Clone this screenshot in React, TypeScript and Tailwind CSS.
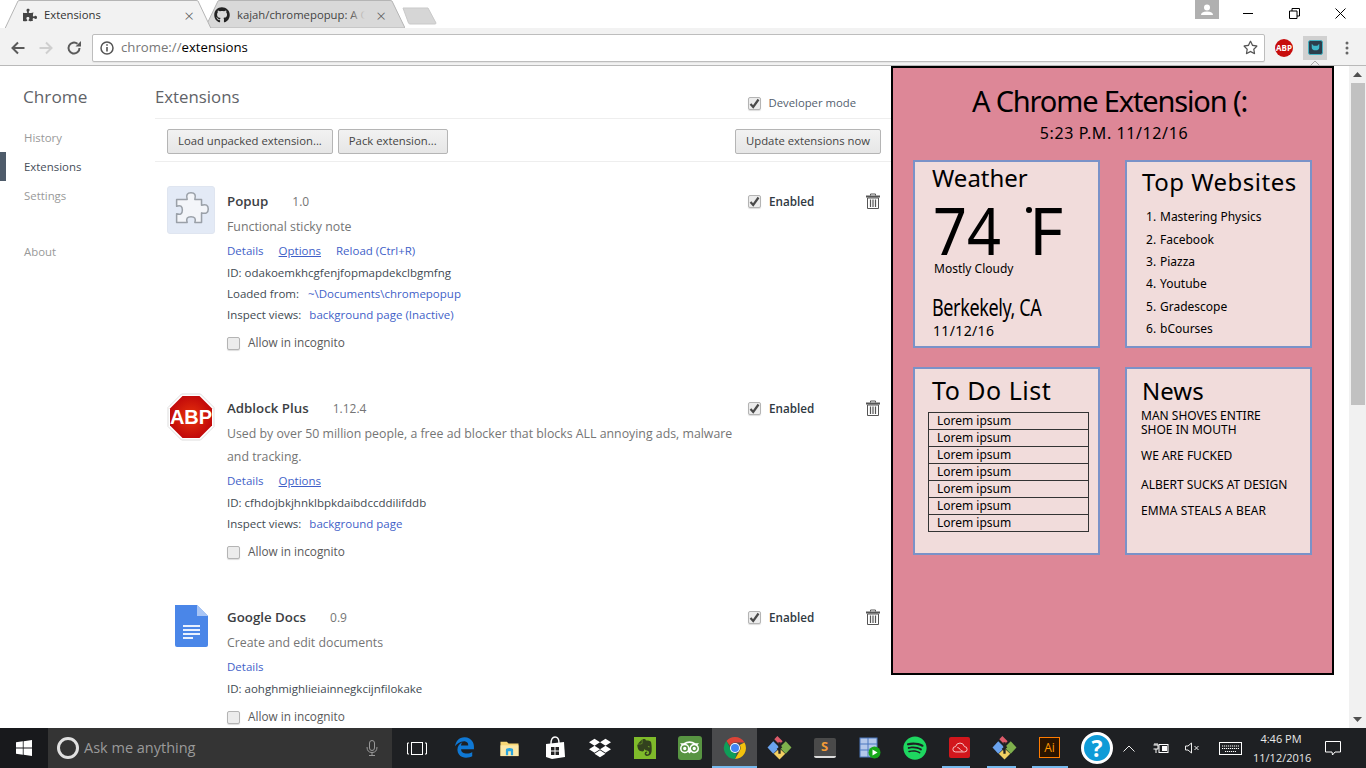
import React from "react";
import { FaPuzzlePiece, FaGithub, FaDropbox, FaSpotify, FaTripadvisor, FaRegStar } from "react-icons/fa";
import { FaEdgeLegacy } from "react-icons/fa6";
import { SiEvernote } from "react-icons/si";

const Check = ({ checked = false, className = "" }: { checked?: boolean; className?: string }) => (
  <span className={`relative inline-block h-[13px] w-[13px] rounded-[2px] border border-[#b4b4b4] bg-[#ececec] shadow-[0_1px_1px_#ddd] ${className}`}>
    {checked && (
      <svg viewBox="0 0 13 13" className="absolute -left-px -top-px h-[13px] w-[13px]">
        <path d="M2.5 7 L5.2 10 L10.5 2.5" fill="none" stroke="#4a4a4a" strokeWidth="2.2" />
      </svg>
    )}
  </span>
);

const A = ({ children, u = false }: { children: React.ReactNode; u?: boolean }) => (
  <span className={`text-[#3f5fc8] ${u ? "underline" : ""}`}>{children}</span>
);

const Trash = () => (
  <svg viewBox="0 0 14 16" className="h-[16px] w-[14px]">
    <path d="M4.5 2.5 V1 H9.5 V2.5" fill="none" stroke="#555" />
    <path d="M0 2.5 H14 V4.5 H0z" fill="#555" />
    <path d="M1.5 5 H12.5 V15.5 H1.5z" fill="none" stroke="#555" />
    <path d="M4.5 6.5 V14 M7 6.5 V14 M9.5 6.5 V14" stroke="#555" strokeWidth="1.2" />
  </svg>
);

const Row = ({ icon, name, ver, children, className = "" }: { icon: React.ReactNode; name: string; ver: string; children: React.ReactNode; className?: string }) => (
  <div className={`flex ${className}`}>
    <div className="ml-[12px] h-[48px] w-[60px] shrink-0">{icon}</div>
    <div className="w-[521px] shrink-0">
      <div className="flex h-[29px] items-center pt-[2px] text-[13.3px]">
        <span className="mr-[24px] font-semibold text-[#3c4043]">{name}</span>
        <span className="text-[12px] text-[#757575]">{ver}</span>
      </div>
      {children}
    </div>
    <div className="flex h-[30px] items-center">
      <Check checked />
      <span className="ml-[8px] mt-[2px] w-[97px] text-[11.7px] font-semibold text-[#303942]">Enabled</span>
      <Trash />
    </div>
  </div>
);

const Line = ({ h, children, className = "" }: { h: string; children: React.ReactNode; className?: string }) => (
  <div className={`flex items-center whitespace-nowrap text-[11.5px] text-[#414a52] ${h} ${className}`}>{children}</div>
);

const Allow = ({ className }: { className: string }) => (
  <div className={`flex h-[22px] items-center text-[11.8px] text-[#5a5a5a] ${className}`}>
    <Check className="mr-[8px]" />
    <span>Allow in incognito</span>
  </div>
);

const Btn = ({ children }: { children: React.ReactNode }) => (
  <div className="flex h-[25px] items-center rounded-[2px] border border-[#b5b5b5] bg-gradient-to-b from-[#f2f2f2] to-[#e6e6e6] px-[10px] text-[11.3px] text-[#444]">{children}</div>
);

const Card = ({ children, className = "" }: { children: React.ReactNode; className?: string }) => (
  <div className={`h-[188px] border-2 border-[#7a92c8] bg-[#f1dcdb] text-black ${className}`}>{children}</div>
);

const Chrome = () => (
  <svg viewBox="0 0 24 24" className="h-[24px] w-[24px]">
    <path d="M12 1a11 11 0 0 1 9.5 5.5H12a5.5 5.5 0 0 0-5 3.2L3.4 5A11 11 0 0 1 12 1z" fill="#db4437" />
    <path d="M21.5 6.5A11 11 0 0 1 12 23l4.7-8.2A5.5 5.5 0 0 0 16.7 9z" fill="#f4c20d" />
    <path d="M12 23A11 11 0 0 1 3.4 5l4.7 8.8a5.5 5.5 0 0 0 5.5 3.5z" fill="#0f9d58" />
    <circle cx="12" cy="12" r="5" fill="#fff" />
    <circle cx="12" cy="12" r="4" fill="#4285f4" />
  </svg>
);

const Tree = () => (
  <svg viewBox="0 0 24 24" className="h-[25px] w-[25px]">
    <path d="M12 12 L6 6 L0.5 12 L6 18z" fill="#6aa3ee" />
    <path d="M12 12 L18 6 L23.5 12 L18 18z" fill="#7fb04c" />
    <path d="M12 13 L6.5 18 L12 23.5 L17.5 18z" fill="#f2cf62" />
    <path d="M7 4 L10 1 L15 6 L12 9z" fill="#dd5b6a" />
    <path d="M12 7 V18 M10 14 L14 11" stroke="#222" strokeWidth="2.2" fill="none" />
  </svg>
);

const TI = ({ children, active = false, line = "" }: { children?: React.ReactNode; active?: boolean; line?: string }) => (
  <div className={`flex h-full w-[45px] shrink-0 flex-col ${active ? "bg-[#4a4b4d]" : ""}`}>
    <div className="flex min-h-0 flex-1 items-center justify-center pt-[1px]">{children}</div>
    <div className={`h-[2px] bg-[#76b9ed] ${line} ${line || active ? "" : "invisible"}`} />
  </div>
);

export default function App() {
  return (
    <div className="flex h-[768px] w-[1366px] flex-col overflow-hidden bg-white font-['Open_Sans',sans-serif] text-[12px]">
      {/* tab strip */}
      <div className="flex h-[28px] shrink-0 items-end bg-white pl-[5px]">
        <div className="relative z-10 h-[28px] w-[206px] shrink-0">
          <svg viewBox="0 0 206 28" className="absolute inset-0 h-full w-full">
            <path d="M0 28.5 L13 1 Q13.5 .5 15 .5 H191 Q192.5 .5 193 1 L206 28.5" fill="#f2f2f2" stroke="#b5b5b5" />
          </svg>
          <div className="relative flex h-full items-center pl-[18px] pr-[17px] pt-[2px]">
            <FaPuzzlePiece size={14} className="text-[#444]" />
            <span className="ml-[7px] flex-1 text-[11.3px] text-[#333]">Extensions</span>
            <span className="text-[17px] font-light leading-none text-[#555]">×</span>
          </div>
        </div>
        <div className="relative -ml-[6px] h-[28px] w-[200px] shrink-0">
          <svg viewBox="0 0 200 28" className="absolute inset-0 h-full w-full">
            <path d="M0 28 L13 1 Q13.5 .5 15 .5 H185 Q186 .5 187 1 L200 28z" fill="#d9d9d9" stroke="#b5b5b5" />
          </svg>
          <div className="relative flex h-full items-center pl-[9px] pr-[19px] pt-[2px]">
            <FaGithub size={16} className="shrink-0 text-[#222]" />
            <span className="relative ml-[7px] w-[128px] overflow-hidden whitespace-nowrap text-[11.3px] text-[#444]">
              kajah/chromepopup: A Chrome
              <span className="absolute inset-y-0 right-0 w-[16px] bg-gradient-to-r from-transparent to-[#d9d9d9]" />
            </span>
            <span className="ml-auto text-[17px] font-light leading-none text-[#555]">×</span>
          </div>
        </div>
        <svg viewBox="0 0 36 18" className="mb-[3px] -ml-[3px] h-[18px] w-[36px] shrink-0">
          <path d="M1 1 H26 L34 16 Q34 17 33 17 H8 Q7 17 6.5 16z" fill="#d6d6d6" stroke="#c9c9c9" />
        </svg>
        <div className="flex-1" />
        <div className="flex h-full items-start">
          <div className="mr-[6px] flex h-[19px] w-[24px] items-center justify-center bg-[#b0b0b0]">
            <svg viewBox="0 0 14 12" className="h-[12px] w-[14px]"><circle cx="7" cy="3.5" r="3" fill="#fff" /><path d="M1 11 Q1 7.5 7 7.5 Q13 7.5 13 11z" fill="#fff" /></svg>
          </div>
          <div className="flex h-[26px] w-[46px] items-center justify-center"><span className="h-px w-[10px] bg-black" /></div>
          <div className="flex h-[26px] w-[46px] items-center justify-center">
            <svg viewBox="0 0 11 11" className="h-[11px] w-[11px]"><path d="M.5 3 H8 V10.5 H.5z M3 3 V.5 H10.5 V8 H8" fill="none" stroke="#000" /></svg>
          </div>
          <div className="flex h-[26px] w-[46px] items-center justify-center">
            <svg viewBox="0 0 11 11" className="h-[11px] w-[11px]"><path d="M.5 .5 L10.5 10.5 M10.5 .5 L.5 10.5" stroke="#000" fill="none" /></svg>
          </div>
          <div className="w-[3px]" />
        </div>
      </div>
      {/* toolbar */}
      <div className="flex h-[38px] shrink-0 items-center border-b border-[#b9b9b9] bg-[#f2f2f2] pt-[2px]">
        <svg viewBox="0 0 16 16" className="ml-[10px] h-[16px] w-[16px]"><path d="M14.5 8 H2.5 M8 2.5 L2.5 8 L8 13.5" fill="none" stroke="#5a5a5a" strokeWidth="2" /></svg>
        <svg viewBox="0 0 16 16" className="ml-[12px] h-[16px] w-[16px]"><path d="M1.5 8 H13.5 M8 2.5 L13.5 8 L8 13.5" fill="none" stroke="#cfcfcf" strokeWidth="2" /></svg>
        <svg viewBox="0 0 16 16" className="ml-[12px] h-[16px] w-[16px]"><path d="M13.5 8 A5.5 5.5 0 1 1 11.5 3.8" fill="none" stroke="#5a5a5a" strokeWidth="2" /><path d="M9.5 6.5 H15 V1z" fill="#5a5a5a" /></svg>
        <div className="ml-[10px] flex h-[28px] w-[1173px] items-center rounded-[2px] border border-[#bdbdbd] bg-white pl-[7px] pr-[6px] shadow-[0_1px_0_#e5e5e5]">
          <svg viewBox="0 0 14 14" className="h-[14px] w-[14px]"><circle cx="7" cy="7" r="6" fill="none" stroke="#555" strokeWidth="1.5" /><path d="M7 6 V10.5 M7 3.2 V4.8" stroke="#555" strokeWidth="1.6" /></svg>
          <span className="ml-[7px] flex-1 text-[13.2px]"><span className="text-[#777]">chrome://</span><span className="text-black">extensions</span></span>
          <FaRegStar size={15} className="text-[#555]" />
        </div>
        <div className="ml-[10px] flex h-[18px] w-[18px] items-center justify-center rounded-full bg-[#c70d0d] text-[8px] font-bold leading-none text-white">ABP</div>
        <div className="relative ml-[10px] flex h-[24px] w-[24px] items-center justify-center bg-[#d0d0d0]">
          <svg viewBox="0 0 16 16" className="h-[15px] w-[15px]"><rect x=".5" y=".5" width="15" height="15" rx="2" fill="#2c3e4c" stroke="#3fb7c9" /><path d="M4 4 V8 Q4 11 8 11 Q12 11 12 8 V4 L10 6 H6z" fill="#3fb7c9" /></svg>
          <svg viewBox="0 0 10 5" className="absolute -bottom-[6px] left-[7px] h-[5px] w-[10px]"><path d="M0 5 L5 0 L10 5" fill="none" stroke="#aaa" /></svg>
        </div>
        <svg viewBox="0 0 4 14" className="ml-[18px] h-[14px] w-[4px]"><circle cx="2" cy="2" r="1.5" fill="#666" /><circle cx="2" cy="7" r="1.5" fill="#666" /><circle cx="2" cy="12" r="1.5" fill="#666" /></svg>
      </div>
      {/* page */}
      <div className="relative flex min-h-0 flex-1 overflow-hidden bg-white">
        <div className="w-[155px] shrink-0 pt-[19px]">
          <div className="pl-[23px] text-[17.2px] leading-[24px] text-[#5f6368]">Chrome</div>
          <div className="mt-[14px] flex h-[29px] items-center pl-[24px] text-[11.4px] text-[#999]">History</div>
          <div className="flex h-[29px] items-center border-l-[6px] border-[#4e5b6a] pl-[18px] text-[11.4px] text-[#464e5a]">Extensions</div>
          <div className="flex h-[29px] items-center pl-[24px] text-[11.4px] text-[#999]">Settings</div>
          <div className="mt-[27px] flex h-[29px] items-center pl-[24px] text-[11.4px] text-[#999]">About</div>
        </div>
        <div className="min-w-0 flex-1">
          <div className="flex h-[53px] w-[740px] items-start border-b border-[#eeeeee] pr-[39px] pt-[19px]">
            <span className="flex-1 text-[16.8px] leading-[24px] text-[#5f6368]">Extensions</span>
            <div className="mt-[11px] flex h-[14px] items-center">
              <Check checked className="mr-[8px]" />
              <span className="text-[11.3px] text-[#53606e]">Developer mode</span>
            </div>
          </div>
          <div className="flex h-[43px] w-[740px] items-start gap-[5px] border-b border-[#eeeeee] pl-[12px] pt-[10px]">
            <Btn>Load unpacked extension...</Btn>
            <Btn>Pack extension...</Btn>
            <div className="ml-auto mr-[14px]"><Btn>Update extensions now</Btn></div>
          </div>
          <div className="pt-[24px]">
            <Row
              className="mb-[39px]"
              name="Popup"
              ver="1.0"
              icon={
                <div className="flex h-[48px] w-[48px] items-center justify-center rounded-[3px] border border-[#dfe5f0] bg-[#e3eaf6]">
                  <svg viewBox="0 0 48 48" className="h-[46px] w-[46px]">
                    <path d="M9 13 H20 Q18 6 24 6 Q30 6 28 13 H35 V19 Q42 17 42 23 Q42 29 35 27 V37 H28 Q30 31 24 31 Q18 31 20 37 H9 V28 Q15 30 15 24 Q15 18 9 20z" fill="#f3f5f9" stroke="#9aa0a8" strokeWidth="1.6" strokeLinejoin="round" />
                  </svg>
                </div>
              }
            >
              <div className="text-[12.33px] leading-[23px] text-[#757575]">Functional sticky note</div>
              <Line h="h-[22px]" className="mt-[2px] gap-[15px]"><A>Details</A><A u>Options</A><A>Reload (Ctrl+R)</A></Line>
              <Line h="h-[22px]">ID: odakoemkhcgfenjfopmapdekclbgmfng</Line>
              <Line h="h-[20px]" className="gap-[9px]">Loaded from:<A>~\Documents\chromepopup</A></Line>
              <Line h="h-[21px]" className="gap-[8px]">Inspect views:<A>background page (Inactive)</A></Line>
              <Allow className="mt-[7px]" />
            </Row>
            <Row
              className="mb-[39px]"
              name="Adblock Plus"
              ver="1.12.4"
              icon={
                <svg viewBox="0 0 48 48" className="h-[48px] w-[48px]">
                  <defs>
                    <radialGradient id="abp"><stop offset="0" stopColor="#e8340c" /><stop offset="1" stopColor="#c20a0a" /></radialGradient>
                  </defs>
                  <path d="M14.5 1 H33.5 L47 14.5 V33.5 L33.5 47 H14.5 L1 33.5 V14.5z" fill="#fff" stroke="#ddd" />
                  <path d="M15.5 3 H32.5 L45 15.5 V32.5 L32.5 45 H15.5 L3 32.5 V15.5z" fill="url(#abp)" />
                  <text x="24" y="31" textAnchor="middle" fontFamily="'Liberation Sans',sans-serif" fontWeight="700" fontSize="20" fill="#fff">ABP</text>
                </svg>
              }
            >
              <div className="w-[515px] text-[12.33px] leading-[23px] text-[#757575]">Used by over 50 million people, a free ad blocker that blocks ALL annoying ads, malware and tracking.</div>
              <Line h="h-[22px]" className="mt-[2px] gap-[15px]"><A>Details</A><A u>Options</A></Line>
              <Line h="h-[21px]">ID: cfhdojbkjhnklbpkdaibdccddilifddb</Line>
              <Line h="h-[21px]" className="gap-[8px]">Inspect views:<A>background page</A></Line>
              <Allow className="mt-[7px]" />
            </Row>
            <Row
              name="Google Docs"
              ver="0.9"
              icon={
                <svg viewBox="0 0 48 48" className="h-[48px] w-[48px]">
                  <path d="M8 3 H30 L41 14 V43 Q41 45 39 45 H10 Q8 45 8 43z" fill="#4a86e8" />
                  <path d="M30 3 L41 14 H30z" fill="#a8c5f5" />
                  <path d="M16 24 H33 M16 28 H33 M16 32 H33 M16 36 H26" stroke="#e8f0fe" strokeWidth="2" />
                </svg>
              }
            >
              <div className="text-[12.33px] leading-[23px] text-[#757575]">Create and edit documents</div>
              <Line h="h-[22px]" className="mt-[2px]"><A>Details</A></Line>
              <Line h="h-[22px]">ID: aohghmighlieiainnegkcijnfilokake</Line>
              <Allow className="mt-[6px]" />
            </Row>
          </div>
        </div>
        {/* scrollbar */}
        <div className="flex w-[17px] shrink-0 flex-col items-center bg-[#f1f1f1]">
          <svg viewBox="0 0 9 5" className="mt-[6px] h-[5px] w-[9px]"><path d="M4.5 0 L9 5 H0z" fill="#505050" /></svg>
          <div className="mt-[6px] h-[322px] w-[14px] bg-[#c1c1c1]" />
          <div className="flex-1" />
          <svg viewBox="0 0 9 5" className="mb-[6px] h-[5px] w-[9px]"><path d="M4.5 5 L9 0 H0z" fill="#505050" /></svg>
        </div>
        {/* popup */}
        <div className="absolute left-[891px] top-0 h-[609px] w-[443px] border-2 border-black bg-[#dd8797] font-['Noto_Sans',sans-serif] text-black">
          <div className="h-[92px] text-center">
            <div className="pr-[6px] pt-[12px] text-[29px] leading-[42px] tracking-[-1.15px]">A Chrome Extension (:</div>
            <div className="pl-[3px] text-[16px] leading-[22px] tracking-[0.6px]">5:23 P.M. 11/12/16</div>
          </div>
          <div className="grid grid-cols-[187px_187px] gap-x-[25px] gap-y-[19px] pl-[20px]">
            <Card>
              <div className="pl-[17px] text-[24px] leading-[32px]">Weather</div>
              <div className="flex pl-[18px] text-[66px] leading-[70px]">
                <span className="w-[96px] shrink-0"><span className="inline-block origin-left scale-x-[0.9]">74</span></span>
                <span className="relative">
                  F
                  <span className="absolute -left-[3px] top-[13px] h-[6px] w-[6px] rounded-full bg-black" />
                </span>
              </div>
              <div className="-mt-[3px] pl-[19px] text-[12px] leading-[16px]">Mostly Cloudy</div>
              <div className="pl-[17px] pt-[14px] text-[24px] leading-[32px] tracking-[-0.5px]"><span className="inline-block origin-left scale-x-[0.75] whitespace-nowrap">Berkekely, CA</span></div>
              <div className="-mt-[1px] pl-[18px] text-[14px] leading-[18px] tracking-[0.35px]">11/12/16</div>
            </Card>
            <Card>
              <div className="pl-[15px] pt-[4px] text-[24px] leading-[32px] tracking-[0.5px]">Top Websites</div>
              <ol className="mt-[8px] pl-[19px] text-[12px]">
                {["Mastering Physics", "Facebook", "Piazza", "Youtube", "Gradescope", "bCourses"].map((t, i) => (
                  <li key={t} className="flex h-[22.4px] items-center">
                    <span className="w-[14px]">{i + 1}.</span>
                    {t}
                  </li>
                ))}
              </ol>
            </Card>
            <Card>
              <div className="pl-[17px] pt-[5px] text-[25px] leading-[32px] tracking-[0.5px]">To Do List</div>
              <div className="ml-[13px] mt-[6px] w-[161px] border-t border-[#333]">
                {[1, 2, 3, 4, 5, 6, 7].map((n) => (
                  <div key={n} className="flex h-[17px] items-center border-x border-b border-[#333] pl-[8px] text-[12px]">Lorem ipsum</div>
                ))}
              </div>
            </Card>
            <Card>
              <div className="pl-[15px] pt-[6px] text-[24px] leading-[32px]">News</div>
              <div className="pl-[14px] text-[12px] leading-[14px]">
                <div className="mt-[2px]">MAN SHOVES ENTIRE<br />SHOE IN MOUTH</div>
                <div className="mt-[12px]">WE ARE FUCKED</div>
                <div className="mt-[15px]">ALBERT SUCKS AT DESIGN</div>
                <div className="mt-[12px] tracking-[0.1px]">EMMA STEALS A BEAR</div>
              </div>
            </Card>
          </div>
        </div>
      </div>
      {/* taskbar */}
      <div className="flex h-[40px] shrink-0 items-center bg-[#1e2023] text-white">
        <div className="flex h-full w-[48px] items-center justify-center bg-[#18191c]">
          <svg viewBox="0 0 16 16" className="h-[16px] w-[16px]"><path d="M0 2.3 L6.8 1.3 V7.5 H0z M7.6 1.2 L16 0 V7.5 H7.6z M0 8.5 H6.8 V14.7 L0 13.7z M7.6 8.5 H16 V16 L7.6 14.8z" fill="#fff" /></svg>
        </div>
        <div className="flex h-full w-[344px] items-center bg-[#343434] pl-[9px] pr-[14px]">
          <span className="h-[22px] w-[22px] rounded-full border-[3px] border-[#e0e0e0]" />
          <span className="ml-[5px] flex-1 text-[14.5px] text-[#9a9a9a]">Ask me anything</span>
          <svg viewBox="0 0 12 16" className="h-[16px] w-[12px]"><rect x="3.5" y=".5" width="5" height="10" rx="2.5" fill="none" stroke="#999" /><path d="M1 7 Q1 12.5 6 12.5 Q11 12.5 11 7 M6 12.5 V15.5 M3 15.5 H9" fill="none" stroke="#999" /></svg>
        </div>
        <div className="flex h-full w-[50px] shrink-0 items-center justify-center">
          <svg viewBox="0 0 20 13" className="h-[13px] w-[20px]"><rect x="4.5" y=".5" width="11" height="12" fill="none" stroke="#fff" /><path d="M2 1 H.5 V12 H2 M18 1 H19.5 V12 H18" fill="none" stroke="#fff" /></svg>
        </div>
        <TI><FaEdgeLegacy size={21} className="text-[#0f78d4]" /></TI>
        <TI>
          <svg viewBox="0 0 22 20" className="h-[18px] w-[21px]"><path d="M1 3 H8 L10 5 H21 V19 H1z" fill="#f7d674" /><path d="M1 7 H21 V19 H1z" fill="#fbe8a8" /><path d="M7 18 V12 Q7 10 11 10 Q15 10 15 12 V18 H12.5 V13.5 H9.5 V18z" fill="#2aa5df" /></svg>
        </TI>
        <TI>
          <svg viewBox="0 0 22 24" className="h-[24px] w-[22px]"><path d="M2 8 L20 6 L21 21 L8 23 L2 21z" fill="#fff" /><path d="M7 8 Q7 1 11 1 Q15 1 15 7" fill="none" stroke="#fff" strokeWidth="1.4" /><path d="M7 11 H10.5 V14.5 H7z M11.5 11 H15 V14.5 H11.5z M7 15.5 H10.5 V19 H7z M11.5 15.5 H15 V19 H11.5z" fill="#222" /></svg>
        </TI>
        <TI><FaDropbox size={22} className="text-white" /></TI>
        <TI>
          <div className="flex h-[22px] w-[22px] items-center justify-center bg-[#7fbb2a]"><SiEvernote size={17} className="text-[#33421e]" /></div>
        </TI>
        <TI>
          <div className="flex h-[24px] w-[24px] items-center justify-center rounded-[3px] bg-[#589442]"><FaTripadvisor size={19} className="text-white" /></div>
        </TI>
        <TI active><Chrome /></TI>
        <TI><Tree /></TI>
        <TI>
          <div className="flex h-[20px] w-[22px] items-center justify-center rounded-[2px] border-b-2 border-[#ddd] bg-[#4a4a4a] text-[13px] font-bold leading-none text-[#f29b37]">S</div>
        </TI>
        <TI>
          <svg viewBox="0 0 22 22" className="h-[22px] w-[22px]"><rect x="1" y="1" width="17" height="19" fill="#b4c8ea" stroke="#4c78bf" /><path d="M1 7 H18 M1 13 H18 M9 1 V20" stroke="#4c78bf" /><circle cx="15.5" cy="15.5" r="6" fill="#17a81a" /><path d="M13.5 12.5 L18.5 15.5 L13.5 18.5z" fill="#fff" /></svg>
        </TI>
        <TI><FaSpotify size={24} className="text-[#1ed760]" /></TI>
        <TI line="ml-[5px] w-[28px]">
          <div className="flex h-[21px] w-[21px] items-center justify-center rounded-[2px] bg-[#d2161c]">
            <svg viewBox="0 0 18 12" className="h-[11px] w-[16px]"><path d="M4 11 Q1 11 1 8 Q1 5 4 5 Q5 1 9 1 Q13 1 14 5 Q17 5 17 8 Q17 11 14 11z M6 6 Q8 6 9 8 Q10 10 12 10" fill="none" stroke="#fbdada" /></svg>
          </div>
        </TI>
        <TI line="ml-[5px] w-[29px]"><Tree /></TI>
        <TI line="ml-[5px] w-[36px]">
          <div className="flex h-[21px] w-[21px] items-center justify-center border border-[#ff7c00] bg-[#2a1400] text-[12px] leading-none text-[#ff9a00]">Ai</div>
        </TI>
        <div className="ml-[9px] flex h-[32px] w-[32px] shrink-0 items-center justify-center rounded-full border-[3px] border-white bg-[#0f9bd7] text-[23px] font-bold leading-none text-white">?</div>
        <div className="flex h-full w-[32px] items-center justify-center">
          <svg viewBox="0 0 12 7" className="h-[7px] w-[12px]"><path d="M.5 6.5 L6 1 L11.5 6.5" fill="none" stroke="#eee" /></svg>
        </div>
        <div className="flex h-full w-[32px] items-center justify-center">
          <svg viewBox="0 0 17 12" className="h-[12px] w-[17px]"><path d="M.5 3 H5 V7 H.5 M2 1 V3 M4 1 V3 M3 7 V11" fill="none" stroke="#fff" /><rect x="6" y="2.5" width="9" height="8" fill="none" stroke="#fff" /><rect x="9" y="4" width="5" height="5" fill="#fff" /></svg>
        </div>
        <div className="flex h-full w-[30px] items-center justify-center">
          <svg viewBox="0 0 15 12" className="h-[12px] w-[15px]"><path d="M.5 4 H3 L6.5 1 V11 L3 8 H.5z M9.5 4 L13.5 8 M13.5 4 L9.5 8" fill="none" stroke="#eee" /></svg>
        </div>
        <div className="flex h-full w-[46px] items-center justify-center">
          <svg viewBox="0 0 23 13" className="h-[13px] w-[23px]"><rect x=".5" y=".5" width="22" height="12" fill="none" stroke="#fff" /><path d="M3 4 H20 M3 6.5 H20 M6 9.5 H17" stroke="#fff" strokeDasharray="1.2 .8" /></svg>
        </div>
        <div className="w-[56px] text-center text-[11px] leading-[19px] text-[#e8e8e8]">
          <div>4:46 PM</div>
          <div>11/12/2016</div>
        </div>
        <div className="flex h-full flex-1 items-center justify-center pr-[9px]">
          <svg viewBox="0 0 16 15" className="h-[15px] w-[16px]"><path d="M.5 .5 H15.5 V11 H10 L7.5 14 L7 11 H.5z" fill="none" stroke="#fff" /></svg>
        </div>
      </div>
    </div>
  );
}
